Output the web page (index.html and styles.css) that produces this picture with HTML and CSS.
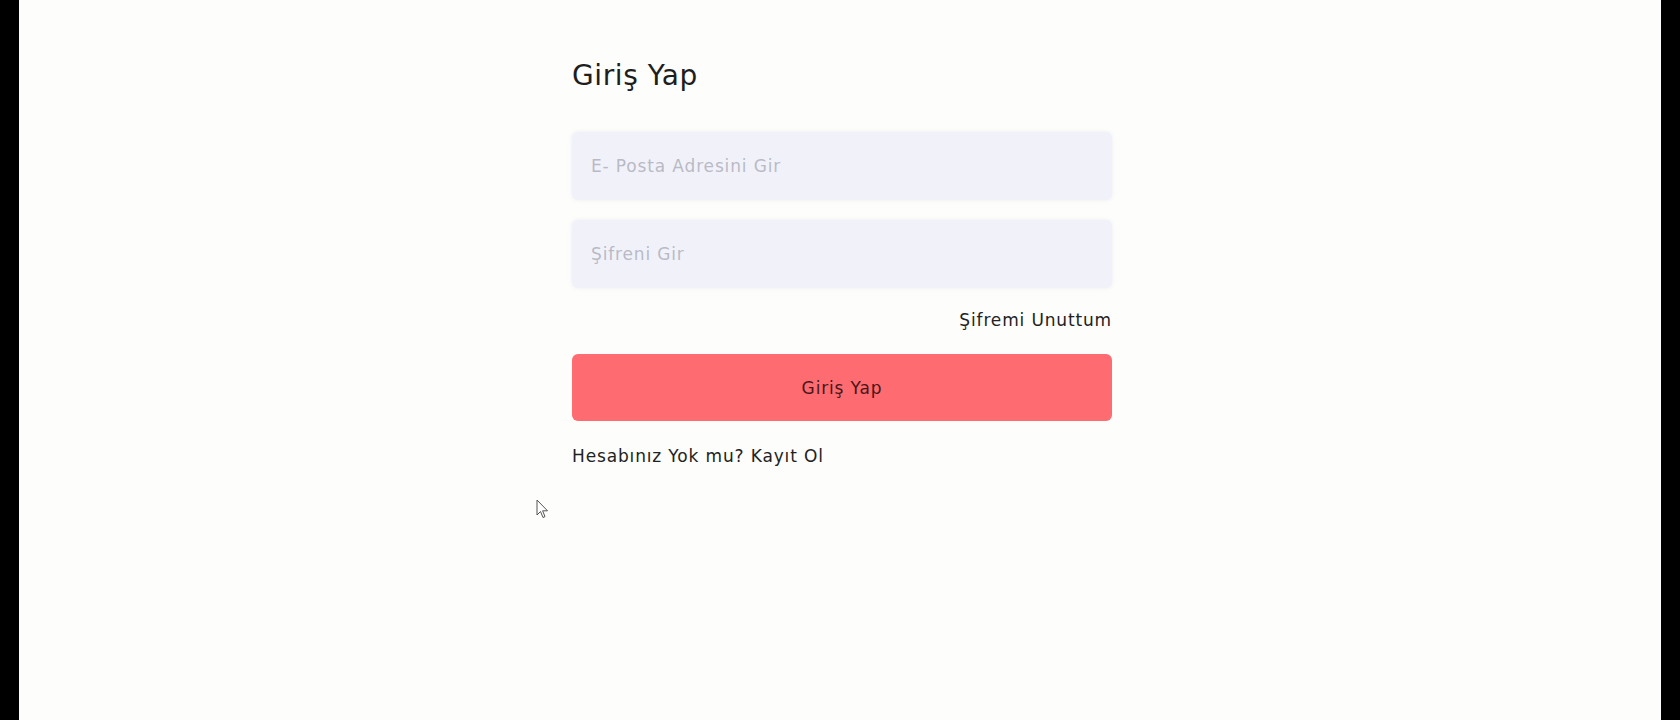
FILE: index.html
```html
<!DOCTYPE html>
<html lang="tr">
<head>
<meta charset="utf-8">
<title>Giriş Yap</title>
<link rel="stylesheet" href="styles.css">
</head>
<body>
<div class="frame">
  <main class="login">
    <h1 class="title">Giriş Yap</h1>
    <form class="form">
      <input class="field" type="email" placeholder="E- Posta Adresini Gir">
      <input class="field" type="password" placeholder="Şifreni Gir">
      <a class="forgot" href="#">Şifremi Unuttum</a>
      <button class="submit" type="button">Giriş Yap</button>
      <p class="register">Hesabınız Yok mu? Kayıt Ol</p>
    </form>
  </main>
  <svg class="cursor" width="13" height="21" viewBox="0 0 13 21" aria-hidden="true">
    <path d="M1 1 L1 16 L4.5 12.5 L7 18.5 L9 17.6 L6.6 11.8 L11.5 11.8 Z" fill="#fff" stroke="#555" stroke-width="1"/>
  </svg>
</div>
</body>
</html>
```

FILE: styles.css
```css
html, body {
  margin: 0;
  padding: 0;
  height: 100%;
}
body {
  background: #000;
  font-family: "DejaVu Sans", "Open Sans", sans-serif;
  color: #222;
}
.frame {
  position: relative;
  margin: 0 19px;
  height: 720px;
  background: #fdfdfb;
  padding-left: 553px;
  box-sizing: border-box;
}
.login {
  width: 540px;
  padding-top: 58px;
}
.title {
  margin: 0 0 38px;
  font-size: 28px;
  letter-spacing: 0.6px;
  font-weight: 400;
  line-height: 36px;
  color: #1e1e1e;
}
.form {
  display: flex;
  flex-direction: column;
}
.field {
  height: 68px;
  border: none;
  outline: none;
  border-radius: 6px;
  background: #f1f2f9;
  box-shadow: 0 0 4px rgba(200, 200, 230, 0.3);
  padding: 0 19px;
  font-family: inherit;
  font-size: 17px;
  letter-spacing: 0.85px;
  color: #333;
  margin-bottom: 20px;
  box-sizing: border-box;
}
.field::placeholder {
  color: #b9bac6;
}
.forgot {
  align-self: flex-end;
  font-size: 17px;
  letter-spacing: 0.85px;
  line-height: 24px;
  color: #222;
  text-decoration: none;
  margin-top: 0;
}
.submit {
  margin-top: 22px;
  height: 67px;
  border: none;
  border-radius: 6px;
  background: #fe6b70;
  color: #4a1618;
  font-family: inherit;
  font-size: 17px;
  letter-spacing: 0.85px;
  cursor: pointer;
}
.register {
  margin: 23px 0 0;
  font-size: 17px;
  letter-spacing: 0.85px;
  line-height: 24px;
  color: #222;
}
.cursor {
  position: absolute;
  left: 517px;
  top: 499px;
}
```
